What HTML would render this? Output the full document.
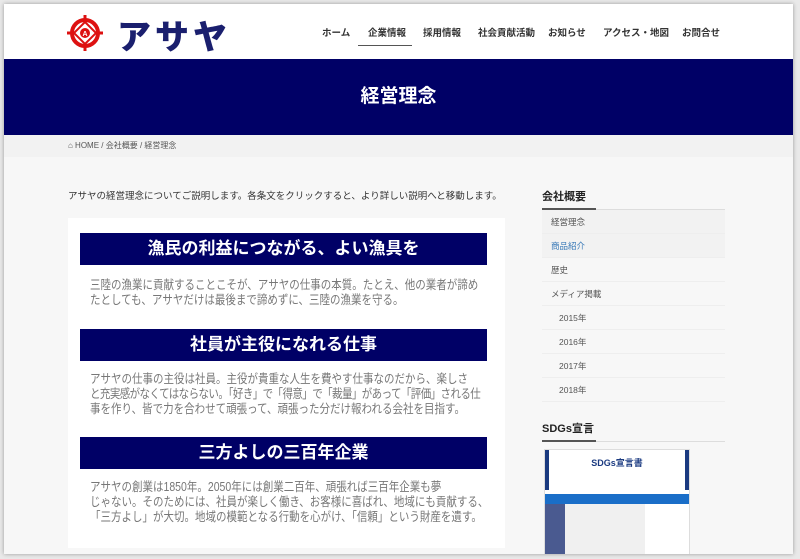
<!DOCTYPE html>
<html><head><meta charset="utf-8"><style>
*{margin:0;padding:0;box-sizing:border-box}
body{width:800px;height:559px;background:#e9e9e9;font-family:"Liberation Sans","Noto Sans CJK JP",sans-serif;overflow:hidden;position:relative}
.frame{position:absolute;left:4px;top:4px;width:789px;height:550px;background:#f7f7f7;box-shadow:0 0 4px rgba(0,0,0,.35);overflow:hidden}
.hdr{position:absolute;left:0;top:0;width:789px;height:55px;background:#fff}
.logo-t{position:absolute;left:113px;top:6px;font-size:34px;font-weight:900;color:#1a1f6e;letter-spacing:4px}
.nav{position:absolute;top:21px;font-size:9.5px;color:#333;font-weight:bold}
.band{position:absolute;left:0;top:55px;width:789px;height:76px;background:#000066;color:#fff;text-align:center;font-size:19px;font-weight:bold;line-height:76px}
.bc{position:absolute;left:0;top:131px;width:789px;height:22px;background:#f2f2f2;font-size:8px;color:#555;line-height:22px;padding-left:64px}
.intro{position:absolute;left:64px;top:184px;font-size:9.5px;color:#333}
.panel{position:absolute;left:64px;top:214px;width:437px;height:330px;background:#fff}
.h{position:absolute;left:12px;width:407px;height:32px;background:#000066;color:#fff;text-align:center;font-size:17px;font-weight:bold;line-height:32px}
.p{position:absolute;left:22px;font-size:12.5px;color:#777;line-height:15px;white-space:nowrap;transform:scaleX(0.84);transform-origin:0 0}
.side{position:absolute;left:538px;width:183px}
.st{font-size:11px;font-weight:bold;color:#222;height:22px;border-bottom:1px solid #ddd;position:relative}
.st:after{content:"";position:absolute;left:0;bottom:-1px;width:54px;height:2px;background:#555}
.li{height:24px;line-height:24px;font-size:8.5px;color:#555;padding-left:9px;border-bottom:1px solid #eee}
.li.s{padding-left:17px}
</style></head><body><div class="frame">
<div class="hdr">
<svg style="position:absolute;left:62px;top:10px" width="38" height="38" viewBox="0 0 38 38"><circle cx="19" cy="19" r="13" fill="none" stroke="#d11" stroke-width="4"/><rect x="17.5" y="1" width="3" height="36" fill="#d11"/><rect x="1" y="17.5" width="36" height="3" fill="#d11"/><polygon points="19,8 30,19 19,30 8,19" fill="#fff" stroke="#d11" stroke-width="2"/><circle cx="19" cy="19" r="5" fill="#d11"/><text x="19" y="22" font-size="7" fill="#fff" text-anchor="middle" font-weight="bold">A</text></svg>
<div class="logo-t">アサヤ</div>
<div class="nav" style="left:318px">ホーム</div>
<div class="nav" style="left:364px">企業情報</div>
<div style="position:absolute;left:354px;top:41px;width:54px;height:1px;background:#555"></div>
<div class="nav" style="left:419px">採用情報</div>
<div class="nav" style="left:474px">社会貢献活動</div>
<div class="nav" style="left:544px">お知らせ</div>
<div class="nav" style="left:599px">アクセス・地図</div>
<div class="nav" style="left:678px">お問合せ</div>
</div>
<div class="band">経営理念</div>
<div class="bc">⌂ HOME / 会社概要 / 経営理念</div>
<div class="intro">アサヤの経営理念についてご説明します。各条文をクリックすると、より詳しい説明へと移動します。</div>
<div class="panel">
<div class="h" style="top:15px">漁民の利益につながる、よい漁具を</div>
<div class="p" style="top:60px">三陸の漁業に貢献することこそが、アサヤの仕事の本質。たとえ、他の業者が諦め<br>たとしても、アサヤだけは最後まで諦めずに、三陸の漁業を守る。</div>
<div class="h" style="top:111px">社員が主役になれる仕事</div>
<div class="p" style="top:154px">アサヤの仕事の主役は社員。主役が貴重な人生を費やす仕事なのだから、楽しさ<br><span style="letter-spacing:-0.7px">と充実感がなくてはならない。「好き」で「得意」で「裁量」があって「評価」される仕</span><br>事を作り、皆で力を合わせて頑張って、頑張った分だけ報われる会社を目指す。</div>
<div class="h" style="top:219px">三方よしの三百年企業</div>
<div class="p" style="top:262px">アサヤの創業は1850年。2050年には創業二百年、頑張れば三百年企業も夢<br>じゃない。そのためには、社員が楽しく働き、お客様に喜ばれ、地域にも貢献する、<br>「三方よし」が大切。地域の模範となる行動を心がけ、「信頼」という財産を遺す。</div>
</div>
<div class="side" style="top:184px">
<div class="st">会社概要</div>
<div class="li" style="background:#f2f2f2">経営理念</div>
<div class="li" style="background:#f2f2f2;color:#3a7ab8">商品紹介</div>
<div class="li">歴史</div>
<div class="li">メディア掲載</div>
<div class="li s">2015年</div>
<div class="li s">2016年</div>
<div class="li s">2017年</div>
<div class="li s">2018年</div>
</div>
<div class="side" style="top:416px"><div class="st">SDGs宣言</div></div>
<div style="position:absolute;left:540px;top:445px;width:146px;height:105px;background:#fff;border:1px solid #ddd">
<div style="height:40px;background:#fff;border-left:4px solid #1a3a80;border-right:4px solid #1a3a80;text-align:center;font-size:9px;font-weight:bold;color:#1a3a80;padding-top:6px">SDGs宣言書</div>
<div style="height:10px;background:#1a6ec8;margin-top:4px"></div>
<div style="height:50px;background:linear-gradient(90deg,#4a5a90 0 20px,#f0f0f0 20px 100px,#fff 100px)"></div>
</div>
</div></body></html>
